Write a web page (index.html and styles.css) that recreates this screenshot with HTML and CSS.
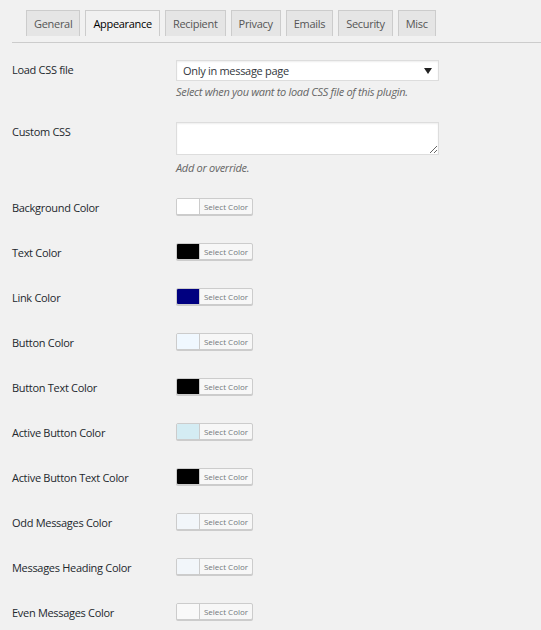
FILE: index.html
```html
<!DOCTYPE html>
<html lang="en">
<head>
<meta charset="utf-8">
<title>Appearance settings</title>
<link rel="stylesheet" href="styles.css">
</head>
<body>
<div class="wrap">
  <nav class="tabs">
    <a class="tab">General</a>
    <a class="tab active">Appearance</a>
    <a class="tab">Recipient</a>
    <a class="tab">Privacy</a>
    <a class="tab">Emails</a>
    <a class="tab">Security</a>
    <a class="tab">Misc</a>
  </nav>
  <div class="form">
    <div class="row row-select">
      <div class="label">Load CSS file</div>
      <div class="field">
        <div class="select">
          <span class="select-text">Only in message page</span>
          <svg class="arrow" width="8" height="6" viewBox="0 0 8 6"><path d="M0 0H8L4 6Z" fill="#222"/></svg>
        </div>
        <p class="desc">Select when you want to load CSS file of this plugin.</p>
      </div>
    </div>
    <div class="row row-text">
      <div class="label">Custom CSS</div>
      <div class="field">
        <textarea class="textarea"></textarea>
        <p class="desc desc-ta">Add or override.</p>
      </div>
    </div>
    <div class="row row-color">
      <div class="label">Background Color</div>
      <div class="field"><div class="picker"><span class="swatch" style="background:#ffffff"></span><span class="picker-text">Select Color</span></div></div>
    </div>
    <div class="row row-color">
      <div class="label">Text Color</div>
      <div class="field"><div class="picker"><span class="swatch" style="background:#000000"></span><span class="picker-text">Select Color</span></div></div>
    </div>
    <div class="row row-color">
      <div class="label">Link Color</div>
      <div class="field"><div class="picker"><span class="swatch" style="background:#000080"></span><span class="picker-text">Select Color</span></div></div>
    </div>
    <div class="row row-color">
      <div class="label">Button Color</div>
      <div class="field"><div class="picker"><span class="swatch" style="background:#f0f8ff"></span><span class="picker-text">Select Color</span></div></div>
    </div>
    <div class="row row-color">
      <div class="label">Button Text Color</div>
      <div class="field"><div class="picker"><span class="swatch" style="background:#000000"></span><span class="picker-text">Select Color</span></div></div>
    </div>
    <div class="row row-color">
      <div class="label">Active Button Color</div>
      <div class="field"><div class="picker"><span class="swatch" style="background:#d4ecf3"></span><span class="picker-text">Select Color</span></div></div>
    </div>
    <div class="row row-color">
      <div class="label">Active Button Text Color</div>
      <div class="field"><div class="picker"><span class="swatch" style="background:#000000"></span><span class="picker-text">Select Color</span></div></div>
    </div>
    <div class="row row-color">
      <div class="label">Odd Messages Color</div>
      <div class="field"><div class="picker"><span class="swatch" style="background:#f2f6fa"></span><span class="picker-text">Select Color</span></div></div>
    </div>
    <div class="row row-color">
      <div class="label">Messages Heading Color</div>
      <div class="field"><div class="picker"><span class="swatch" style="background:#f2f6fa"></span><span class="picker-text">Select Color</span></div></div>
    </div>
    <div class="row row-color">
      <div class="label">Even Messages Color</div>
      <div class="field"><div class="picker"><span class="swatch" style="background:#f9f9f9"></span><span class="picker-text">Select Color</span></div></div>
    </div>
  </div>
</div>
</body>
</html>
```
FILE: styles.css
```css
html, body {
  margin: 0;
  padding: 0;
  background: #f1f1f1;
}
body {
  font-family: "Open Sans", "Noto Sans", sans-serif;
  font-size: 11px;
  letter-spacing: -0.3px;
  color: #23282d;
}
.wrap {
  padding-left: 12px;
}
.tabs {
  display: flex;
  gap: 5px;
  padding: 10px 0 6px 14px;
  border-bottom: 1px solid #ccc;
}
.tab {
  display: block;
  box-sizing: border-box;
  height: 26px;
  line-height: 25px;
  padding: 0 7px;
  border: 1px solid #ccc;
  border-bottom: none;
  background: #e5e5e5;
  color: #555;
  font-size: 11px;
}
.tab.active {
  background: #f1f1f1;
  color: #000;
}
.form {
  padding-top: 17px;
}
.row {
  display: grid;
  grid-template-columns: 164px 263px;
  align-items: start;
}
.label {
  line-height: 19px;
  color: #23282d;
}
.row-text {
  margin-top: 23px;
}
.row-color {
  margin-top: 23px;
  height: 18px;
}
.row-color + .row-color {
  margin-top: 27px;
}
.select {
  position: relative;
  box-sizing: border-box;
  height: 21px;
  border: 1px solid #ddd;
  background: #fff;
  box-shadow: inset 0 1px 2px rgba(0,0,0,0.07);
  display: flex;
  align-items: center;
  padding-left: 6px;
  color: #32373c;
}
.arrow {
  position: absolute;
  right: 6px;
  top: 7px;
}
.desc {
  margin: 4px 0 0;
  line-height: 14px;
  font-style: italic;
  color: #666;
}
.desc-ta {
  margin-top: 6px;
}
.textarea {
  display: block;
  box-sizing: border-box;
  width: 263px;
  height: 33px;
  margin: 0;
  border: 1px solid #ddd;
  background: #fff;
  box-shadow: inset 0 1px 2px rgba(0,0,0,0.07);
  resize: both;
}
.picker {
  display: flex;
  box-sizing: border-box;
  width: 77px;
  height: 17px;
  border: 1px solid #ccc;
  border-radius: 2px;
  background: #f7f7f7;
  box-shadow: 0 1px 0 #ccc;
  overflow: hidden;
}
.swatch {
  width: 22px;
  border-right: 1px solid #ccc;
}
.picker-text {
  flex: 1;
  text-align: center;
  font-size: 8px;
  letter-spacing: 0;
  line-height: 15px;
  color: #72777c;
}
```
